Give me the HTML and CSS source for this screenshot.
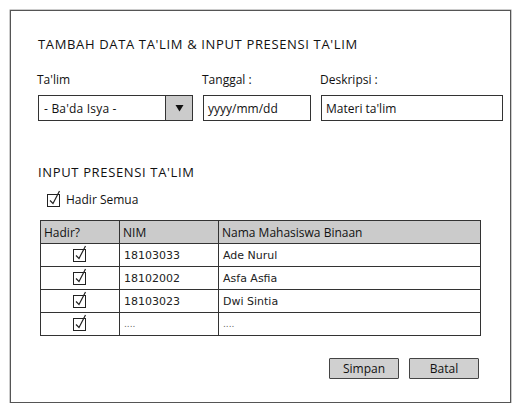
FILE: index.html
```html
<!DOCTYPE html>
<html>
<head>
<meta charset="utf-8">
<link rel="stylesheet" href="styles.css">
</head>
<body>
<div class="frame">
  <h1 class="title">TAMBAH DATA TA'LIM &amp; INPUT PRESENSI TA'LIM</h1>
  <div class="fields">
    <div class="field f1">
      <div class="label">Ta'lim</div>
      <div class="select">
        <span class="select-text">- Ba'da Isya -</span>
        <span class="select-btn"><svg width="9" height="8" viewBox="0 0 9 8"><path d="M0.5 1 L8.5 1 L4.5 7.5 Z" fill="#111"/></svg></span>
      </div>
    </div>
    <div class="field f2">
      <div class="label">Tanggal :</div>
      <div class="input">yyyy/mm/dd</div>
    </div>
    <div class="field f3">
      <div class="label">Deskripsi :</div>
      <div class="input">Materi ta'lim</div>
    </div>
  </div>
  <h2 class="title sub">INPUT PRESENSI TA'LIM</h2>
  <div class="check-all">
    <svg class="cb" width="16" height="18" viewBox="0 0 16 18"><rect x="0.5" y="4.5" width="12" height="12" fill="#fff" stroke="#222"/><path d="M3 10.5 L6 13.5 L12.5 1" fill="none" stroke="#222" stroke-width="1.2"/></svg>
    <span>Hadir Semua</span>
  </div>
  <table class="grid">
    <thead>
      <tr><th class="c1">Hadir?</th><th class="c2">NIM</th><th class="c3">Nama Mahasiswa Binaan</th></tr>
    </thead>
    <tbody>
      <tr><td class="chk"><svg class="cb" width="16" height="18" viewBox="0 0 16 18"><rect x="0.5" y="4.5" width="12" height="12" fill="#fff" stroke="#222"/><path d="M3 10.5 L6 13.5 L12.5 1" fill="none" stroke="#222" stroke-width="1.2"/></svg></td><td>18103033</td><td>Ade Nurul</td></tr>
      <tr><td class="chk"><svg class="cb" width="16" height="18" viewBox="0 0 16 18"><rect x="0.5" y="4.5" width="12" height="12" fill="#fff" stroke="#222"/><path d="M3 10.5 L6 13.5 L12.5 1" fill="none" stroke="#222" stroke-width="1.2"/></svg></td><td>18102002</td><td>Asfa Asfia</td></tr>
      <tr><td class="chk"><svg class="cb" width="16" height="18" viewBox="0 0 16 18"><rect x="0.5" y="4.5" width="12" height="12" fill="#fff" stroke="#222"/><path d="M3 10.5 L6 13.5 L12.5 1" fill="none" stroke="#222" stroke-width="1.2"/></svg></td><td>18103023</td><td>Dwi Sintia</td></tr>
      <tr><td class="chk"><svg class="cb" width="16" height="18" viewBox="0 0 16 18"><rect x="0.5" y="4.5" width="12" height="12" fill="#fff" stroke="#222"/><path d="M3 10.5 L6 13.5 L12.5 1" fill="none" stroke="#222" stroke-width="1.2"/></svg></td><td class="dots">....</td><td class="dots">....</td></tr>
    </tbody>
  </table>
  <div class="actions">
    <button class="btn">Simpan</button>
    <button class="btn">Batal</button>
  </div>
</div>
</body>
</html>
```
FILE: styles.css
```css
html, body {
  margin: 0;
  padding: 0;
  background: #fff;
}
body {
  font-family: "Open Sans", "DejaVu Sans", sans-serif;
  color: #111;
}
.frame {
  margin: 10px 0 0 10px;
  width: 499px;
  height: 391px;
  border: 1px solid #555;
  box-sizing: content-box;
  padding: 0;
  box-shadow: 0 0 0 0.5px #999;
}
.title {
  margin: 25px 0 0 27px;
  font-size: 13px;
  font-weight: 400;
  line-height: 16px;
  letter-spacing: 0.65px;
}
.fields {
  display: flex;
  column-gap: 10px;
  margin: 20px 0 0 27px;
}
.field {
  display: flex;
  flex-direction: column;
}
.f1 { width: 155px; }
.f2 { width: 108px; }
.f3 { width: 182px; }
.label {
  font-size: 12px;
  line-height: 16px;
  height: 16px;
  margin-left: -1px;
}
.select, .input {
  margin-top: 7px;
  height: 26px;
  box-sizing: border-box;
  border: 1px solid #333;
  font-size: 12px;
  display: flex;
  align-items: center;
  background: #fff;
}
.select-text {
  flex: 1;
  padding-left: 5px;
  letter-spacing: 0.2px;
}
.select-btn {
  width: 26px;
  align-self: stretch;
  background: #cbcbcb;
  border-left: 1px solid #333;
  display: flex;
  align-items: center;
  justify-content: center;
}
.input {
  padding-left: 4px;
}
.sub {
  margin-top: 43px;
}
.check-all {
  display: flex;
  align-items: flex-end;
  gap: 3px;
  margin: 10px 0 0 36px;
  font-size: 12px;
  line-height: 16px;
}
.check-all .cb {
  display: block;
}
.grid {
  margin: 12px 0 0 29px;
  width: 441px;
  border-collapse: collapse;
  font-family: "DejaVu Sans", sans-serif;
  font-size: 11px;
  color: #222;
}
.grid th, .grid td {
  border: 1px solid #333;
  height: 22px;
  padding: 0 0 0 4px;
  text-align: left;
  vertical-align: middle;
}
.grid th {
  background: #cbcbcb;
  font-family: "Open Sans", "DejaVu Sans", sans-serif;
  font-weight: 400;
  font-size: 12px;
  height: 22px;
  padding-left: 3px;
  color: #111;
}
.c1 { width: 75px; }
.c2 { width: 95px; }
.grid td.chk {
  padding: 0;
  text-align: center;
}
.grid td.chk .cb {
  display: inline-block;
  vertical-align: middle;
  margin: -3px 0 0 1px;
}
.dots {
  color: #666;
  font-size: 9px;
}
.actions {
  display: flex;
  justify-content: flex-end;
  gap: 10px;
  margin: 22px 31px 0 0;
}
.btn {
  width: 70px;
  height: 21px;
  padding: 0;
  background: #d0d0d0;
  border: 1px solid #444;
  border-radius: 1px;
  font-family: "Open Sans", "DejaVu Sans", sans-serif;
  font-size: 12px;
  color: #111;
  line-height: 19px;
}
```
